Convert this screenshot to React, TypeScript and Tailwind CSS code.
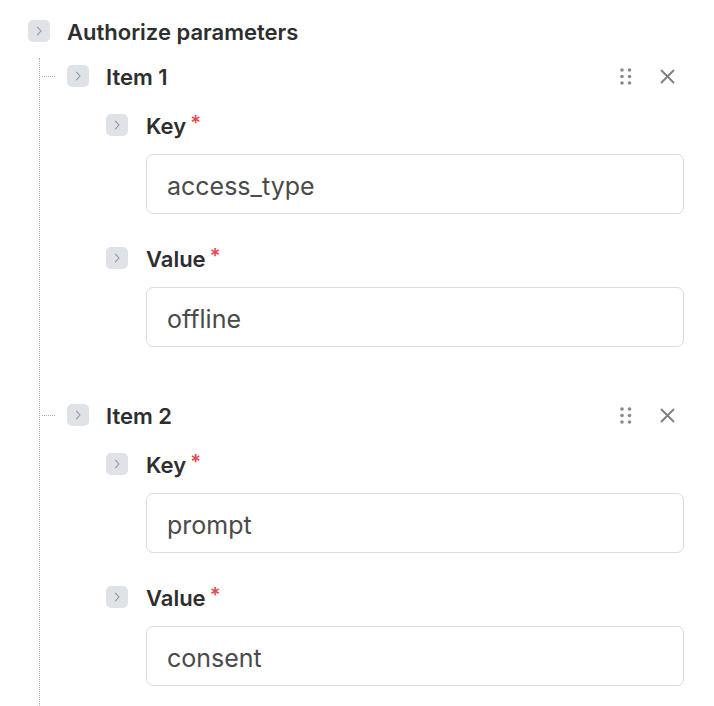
import React from "react";

interface Param {
  key: string;
  value: string;
}

const params: Param[] = [
  { key: "access_type", value: "offline" },
  { key: "prompt", value: "consent" },
];

const Toggle = () => (
  <span className="flex h-[22px] w-[22px] shrink-0 items-center justify-center rounded-[5px] bg-[#dfe3e8]">
    <svg width="10" height="10" viewBox="0 0 10 10" fill="none">
      <path d="M3.5 1.2 L7 5 L3.5 8.8" stroke="#8e959e" strokeWidth="1.1" strokeLinecap="round" strokeLinejoin="round" />
    </svg>
  </span>
);

const Grip = () => (
  <svg width="12" height="17" viewBox="0 0 12 17" fill="#8a8a8a">
    <circle cx="2" cy="2" r="1.8" />
    <circle cx="9.5" cy="2" r="1.8" />
    <circle cx="2" cy="8.5" r="1.8" />
    <circle cx="9.5" cy="8.5" r="1.8" />
    <circle cx="2" cy="15" r="1.8" />
    <circle cx="9.5" cy="15" r="1.8" />
  </svg>
);

const Close = () => (
  <svg width="15" height="15" viewBox="0 0 15 15" fill="none">
    <path d="M1.5 1.5 L13.5 13.5 M13.5 1.5 L1.5 13.5" stroke="#7d7d7d" strokeWidth="1.8" strokeLinecap="round" />
  </svg>
);

const Field = ({ label, value, className = "" }: { label: string; value: string; className?: string }) => (
  <div className={className}>
    <div className="flex h-[30px] items-center gap-[18px]">
      <Toggle />
      <span className="pt-[2px] text-[22px] font-semibold text-[#2e2e2e]">
        {label}
        <span className="ml-[4px] align-top text-[20px] leading-[26px] text-[#e5484d]">*</span>
      </span>
    </div>
    <div className="mt-[14px] ml-[40px] flex h-[60px] items-center rounded-[7px] border border-[#dcdcdc] px-[20px] pt-[5px] text-[25px] text-[#4a4a4a]">
      {value}
    </div>
  </div>
);

const Item = ({ index, param, className = "" }: { index: number; param: Param; className?: string }) => (
  <div className={className}>
    <div className="flex h-[30px] items-center">
      <span className="ml-[2px] w-[13px] border-t border-dotted border-[#a9a9a9]" />
      <span className="ml-[12px]">
        <Toggle />
      </span>
      <span className="ml-[17px] pt-[2px] text-[22px] font-semibold text-[#2e2e2e]">Item {index}</span>
      <div className="mr-[9px] ml-auto flex items-center gap-[28px]">
        <Grip />
        <Close />
      </div>
    </div>
    <div className="ml-[66px]">
      <Field label="Key" value={param.key} className="mt-[19px]" />
      <Field label="Value" value={param.value} className="mt-[29px]" />
    </div>
  </div>
);

export default function App() {
  return (
    <div className="min-h-screen bg-white pt-[16px] pr-[30px] pl-[28px] font-['Inter','Noto_Sans',sans-serif]">
      <div className="flex h-[30px] items-center gap-[17px]">
        <Toggle />
        <span className="pt-[2px] text-[22px] font-semibold text-[#2e2e2e]">Authorize parameters</span>
      </div>
      <div className="mt-[12px] ml-[11px] border-l border-dotted border-[#a9a9a9] pt-[3px] pb-[30px]">
        {params.map((p, i) => (
          <Item key={i} index={i + 1} param={p} className={i > 0 ? "mt-[53px]" : ""} />
        ))}
      </div>
    </div>
  );
}
